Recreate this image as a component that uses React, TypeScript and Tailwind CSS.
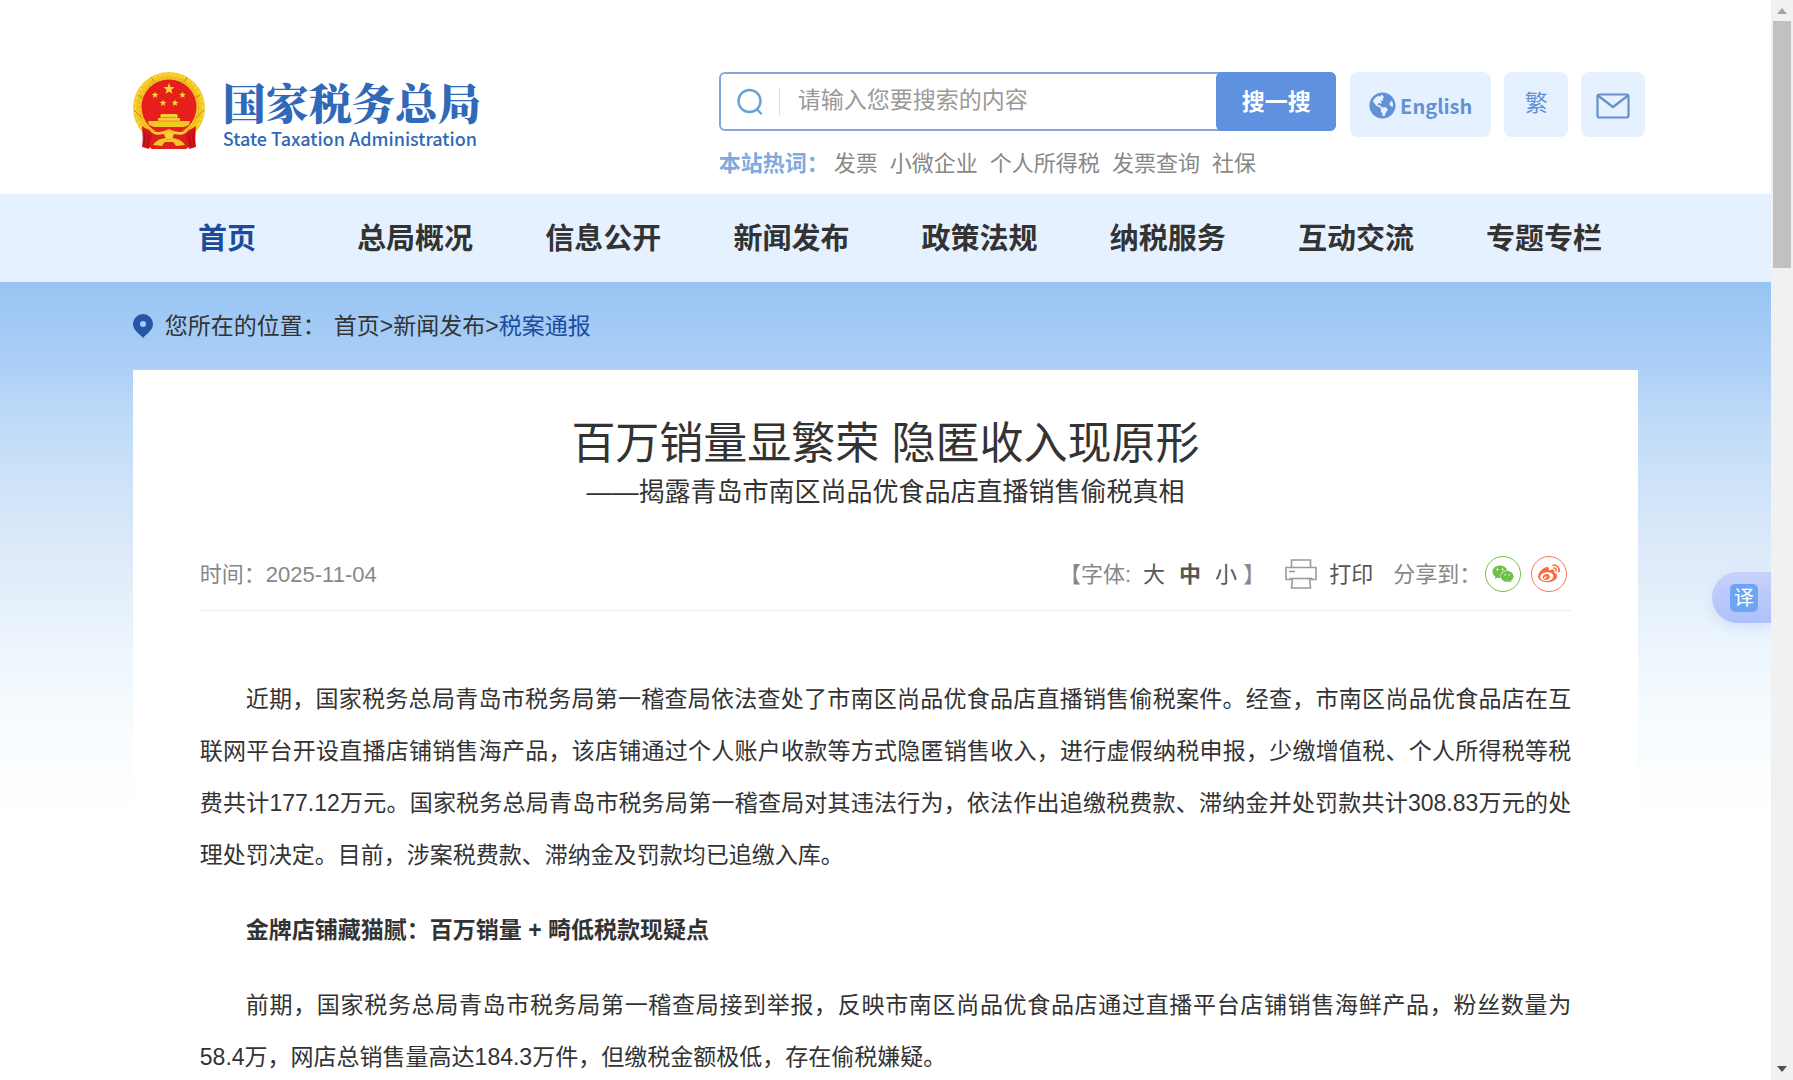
import { FaGlobeAmericas, FaWeibo, FaWeixin } from 'react-icons/fa'

const hotWords = ['发票', '小微企业', '个人所得税', '发票查询', '社保']

const navItems = ['首页', '总局概况', '信息公开', '新闻发布', '政策法规', '纳税服务', '互动交流', '专题专栏']

const paragraphs = [
  {
    text: '近期，国家税务总局青岛市税务局第一稽查局依法查处了市南区尚品优食品店直播销售偷税案件。经查，市南区尚品优食品店在互联网平台开设直播店铺销售海产品，该店铺通过个人账户收款等方式隐匿销售收入，进行虚假纳税申报，少缴增值税、个人所得税等税费共计177.12万元。国家税务总局青岛市税务局第一稽查局对其违法行为，依法作出追缴税费款、滞纳金并处罚款共计308.83万元的处理处罚决定。目前，涉案税费款、滞纳金及罚款均已追缴入库。',
  },
  { text: '金牌店铺藏猫腻：百万销量 + 畸低税款现疑点', bold: true },
  {
    text: '前期，国家税务总局青岛市税务局第一稽查局接到举报，反映市南区尚品优食品店通过直播平台店铺销售海鲜产品，粉丝数量为58.4万，网店总销售量高达184.3万件，但缴税金额极低，存在偷税嫌疑。',
  },
]

function Star({ x, y, r }: { x: number; y: number; r: number }) {
  const points = Array.from({ length: 10 }, (_, i) => {
    const radius = i % 2 === 0 ? r : r * 0.4
    const angle = (Math.PI / 5) * i - Math.PI / 2
    return `${(x + radius * Math.cos(angle)).toFixed(2)},${(y + radius * Math.sin(angle)).toFixed(2)}`
  }).join(' ')
  return <polygon points={points} fill="#fbd83a" />
}

function Emblem() {
  return (
    <svg viewBox="0 0 72 78" className="h-[78px] w-[72px] shrink-0" aria-hidden="true">
      <circle cx="36" cy="36" r="36" fill="#f3c623" />
      <circle cx="36" cy="36" r="34" fill="none" stroke="#f9d840" strokeWidth="2" strokeDasharray="3 2" />
      <circle cx="36" cy="35.500" r="29.500" fill="none" stroke="#e5ad1a" strokeWidth="1.200" strokeDasharray="2 2" />
      <path d="M1 38l8 8M71 38l-8 8M5 23l5 3M67 23l-5 3M18 5l3 5M54 5l-3 5" stroke="#c98a12" strokeWidth="1" />
      <circle cx="36" cy="35" r="27.500" fill="#e71f1c" />
      <Star x={36} y={17} r={6} />
      <Star x={22} y={23} r={3.6} />
      <Star x={49.5} y={23} r={3.6} />
      <Star x={30} y={31} r={3.6} />
      <Star x={42} y={31} r={3.6} />
      {/* gate tower */}
      <path d="M28 42h16l1 3h-1v1h3v5H25v-5h3v-1h-1z" fill="#f8cf33" />
      <path d="M15 49h42l-1 4-5 2H21l-5-2z" fill="#f3c623" />
      <path d="M29 45.500h14M25 49h22" stroke="#d3851a" strokeWidth=".8" />
      {/* drapes and wheel */}
      <path d="M9 54c8 6 18 7 27 5 9 2 19 1 27-5l-1 17-9 6H19l-9-6z" fill="#dd1f1d" />
      <path d="M10 56l9 5v4l-3 12-7-2 1-9zM62 56l-9 5v4l3 12 7-2-1-9z" fill="#d4141a" />
      <path d="M12 61l-1 12M16 63l-2 12M60 61l1 12M56 63l2 12" stroke="#9d1113" strokeWidth="1" />
      <path d="M16 57c7 5 13 3 20 0 7 3 13 5 20 0-2 5-9 7-14 5l-6 4-6-4c-5 2-12 0-14-5z" fill="#f8cf33" />
      <path d="M20 73c4-6 9-7 16-7s12 1 16 7l-9 1-3-4h-8l-3 4z" fill="#f3c623" />
      <circle cx="36" cy="63" r="4.500" fill="#f8cf33" stroke="#d3851a" strokeWidth="1" strokeDasharray="1 1" />
      <path d="M28 77l3-6h10l3 6z" fill="#dd1f1d" />
    </svg>
  )
}

function SearchIcon() {
  return (
    <svg viewBox="0 0 26 28" className="h-7 w-[26px] shrink-0" fill="none" stroke="#6a9fd8" strokeWidth="2.400" strokeLinecap="round" aria-hidden="true">
      <circle cx="12.500" cy="13" r="11" />
      <path d="M20 21.500l4 4" />
    </svg>
  )
}

function MailIcon() {
  return (
    <svg viewBox="0 0 34 26" className="h-[26px] w-[34px]" fill="none" stroke="#668fcb" strokeWidth="2.200" strokeLinejoin="round" aria-hidden="true">
      <rect x="1.500" y="1.500" width="31" height="23" rx="2" />
      <path d="M2.500 3L17 14 31.500 3" />
    </svg>
  )
}

function PinIcon() {
  return (
    <svg viewBox="0 0 20 24" className="h-6 w-5 shrink-0" aria-hidden="true">
      <path d="M10 0a10 10 0 0 1 10 10c0 6-6 9.500-10 14C6 19.500 0 16 0 10A10 10 0 0 1 10 0z" fill="#2556a6" />
      <circle cx="10" cy="10" r="3" fill="#a4cbf5" />
    </svg>
  )
}

function PrinterIcon() {
  return (
    <svg viewBox="0 0 32 30" className="h-[30px] w-8" fill="none" stroke="#9b9b9b" strokeWidth="1.600" aria-hidden="true">
      <path d="M6.500 8.500V1h19v7.500" />
      <path d="M6.500 20.500H1V8.500h30v12h-5.500" />
      <path d="M4.500 19.500h23" />
      <path d="M7.500 19.500L6.500 29h19l-1-9.500" />
      <path d="M4 12.500h6" />
    </svg>
  )
}

function Header() {
  return (
    <header className="mx-auto flex h-[194px] w-[85%] items-start pt-[72px]">
      <a href="#" className="flex w-[586px] shrink-0 items-start text-[#2f69b8]">
        <Emblem />
        <span className="ml-[18px] flex flex-col pt-1.5">
          <span className="font-['Noto_Serif_CJK_SC','Noto_Sans_CJK_SC',serif] text-[43px] leading-[48px] font-black">国家税务总局</span>
          <span className="font-['Noto_Sans_CJK_SC',sans-serif] text-[18px] leading-6 font-medium">State Taxation Administration</span>
        </span>
      </a>

      <div className="min-w-0 flex-1">
        <form className="flex h-[59px] items-stretch rounded-md border-2 border-[#83a6d8] bg-white" onSubmit={(e) => e.preventDefault()}>
          <label htmlFor="keyword" className="flex items-center pl-4">
            <SearchIcon />
            <span className="ml-4 h-7 w-px bg-[#dedede]" />
          </label>
          <input
            id="keyword"
            type="text"
            aria-label="搜索"
            placeholder="请输入您要搜索的内容"
            className="min-w-0 flex-1 px-[18px] pb-0.5 text-[23px] outline-none placeholder:text-[#999]"
          />
          <button type="submit" className="-m-0.5 w-[120px] rounded-md bg-[#5e91e0] pt-0.5 text-[23px] font-bold text-white">
            搜一搜
          </button>
        </form>
        <div className="mt-[17px] flex items-center text-[22px] leading-8 whitespace-nowrap text-[#888]">
          <span className="w-[115px] font-bold text-[#7eaadf]">本站热词：</span>
          <div className="flex gap-3">
            {hotWords.map((word) => (
              <a key={word} href="#">{word}</a>
            ))}
          </div>
        </div>
      </div>

      <div className="-mr-[7px] ml-3.5 flex shrink-0 gap-[13px] text-[20px] text-[#6391d6]">
        <a href="#" className="flex h-[65px] w-[141px] items-center justify-center gap-1 rounded-lg bg-[#e5f1ff] pt-0.5 font-['Noto_Sans_CJK_SC',sans-serif] font-bold">
          <FaGlobeAmericas className="size-[27px]" />
          English
        </a>
        <a href="#" className="flex h-[65px] w-16 items-center justify-center rounded-lg bg-[#e5f1ff] pb-0.5 text-[23px]">繁</a>
        <a href="#" aria-label="邮箱" className="flex h-[65px] w-16 items-center justify-center rounded-lg bg-[#e5f1ff] pt-0.5">
          <MailIcon />
        </a>
      </div>
    </header>
  )
}

function Nav() {
  return (
    <nav className="bg-[#e5f1ff]">
      <ul className="mx-auto grid w-[85%] grid-cols-8 pt-0.5">
        {navItems.map((item, i) => (
          <li key={item} className="text-center text-[29px] leading-[86px] font-bold whitespace-nowrap">
            <a href="#" className={i === 0 ? 'text-[#1b4c9c]' : 'text-[#333]'}>{item}</a>
          </li>
        ))}
      </ul>
    </nav>
  )
}

function ArticleMeta() {
  return (
    <div className="flex h-[75px] items-center border-b border-[#ececec] pt-0.5 text-[22px] whitespace-nowrap text-[#888]">
      <span>时间：2025-11-04</span>
      <div className="ml-auto flex items-center text-[#555]">
        <span className="text-[#888]">【字体:</span>
        <button type="button" className="ml-3">大</button>
        <button type="button" className="ml-3.5 font-bold">中</button>
        <button type="button" className="ml-3.5">小</button>
        <span className="ml-1.5 text-[#888]">】</span>
        <button type="button" className="ml-5 flex items-center gap-3">
          <PrinterIcon />
          打印
        </button>
        <span className="ml-5 text-[#888]">分享到：</span>
        <a href="#" aria-label="微信" className="ml-1 flex size-9 items-center justify-center rounded-full border border-[#6fc04a] text-[#6fc04a]">
          <FaWeixin className="size-[22px]" />
        </a>
        <a href="#" aria-label="微博" className="mr-1 ml-2.5 flex size-9 items-center justify-center rounded-full border border-[#f7794c] text-[#fa6a3a]">
          <FaWeibo className="size-[22px]" />
        </a>
      </div>
    </div>
  )
}

function Article() {
  return (
    <article className="bg-white px-[67px] pt-12 text-[#333]">
      <h1 className="text-center text-[44px] leading-[52px]">百万销量显繁荣 隐匿收入现原形</h1>
      <p className="text-center text-[26px] leading-[44px]">——揭露青岛市南区尚品优食品店直播销售偷税真相</p>
      <div className="mt-[22px]">
        <ArticleMeta />
      </div>
      <div className="flex flex-col gap-[23px] pt-[62px]">
        {paragraphs.map((p) => (
          <p
            key={p.text}
            className={p.bold ? 'indent-[46px] text-[23px] leading-[52px] font-bold' : 'text-justify indent-[46px] text-[23px] leading-[52px]'}
          >
            {p.text}
          </p>
        ))}
      </div>
    </article>
  )
}

function ScrollRail() {
  return (
    <div className="flex w-[22px] shrink-0 flex-col items-center justify-between bg-[#f1f1f1] py-2" aria-hidden="true">
      <div className="flex flex-col items-center gap-[7px]">
        <svg viewBox="0 0 10 6" className="h-1.5 w-2.5"><path d="M0 6l5-6 5 6z" fill="#a3a3a3" /></svg>
        <div className="h-[247px] w-[18px] bg-[#c1c1c1]" />
      </div>
      <svg viewBox="0 0 10 6" className="h-1.5 w-2.5"><path d="M0 0l5 6 5-6z" fill="#505050" /></svg>
    </div>
  )
}

export default function App() {
  return (
    <div className="flex h-screen overflow-hidden bg-white font-['Liberation_Sans','Noto_Sans_CJK_SC',sans-serif]" lang="zh-CN">
      <div className="relative min-w-0 flex-1 overflow-hidden">
        <Header />
        <Nav />
        <main className="bg-[linear-gradient(to_bottom,#97c4f3_0,#aed0f7_88px,#bfdbf8_140px,#cfe3f9_208px,#dfebfa_280px,#ecf5fd_360px,#f8fcfe_450px,#fff_540px)]">
          <div className="mx-auto w-[85%]">
            <div className="flex h-[88px] items-center text-[23px] text-[#333]">
              <PinIcon />
              <span className="ml-3">您所在的位置：</span>
              <span className="ml-2">
                <a href="#">首页</a>&gt;<a href="#">新闻发布</a>&gt;<a href="#" className="text-[#1b4c9c]">税案通报</a>
              </span>
            </div>
            <Article />
          </div>
        </main>
        <button
          type="button"
          aria-label="翻译"
          className="absolute top-[572px] right-0 flex h-[51px] w-[59px] items-center rounded-l-full bg-linear-to-b from-[#c6d2fb] to-[#afc0fb] pl-[18px] shadow-[0_4px_12px_rgba(120,150,230,0.2)]"
        >
          <span className="flex size-7 items-center justify-center rounded-[5px] bg-[#6ea4f4] text-[20px] leading-7 text-white">译</span>
        </button>
      </div>
      <ScrollRail />
    </div>
  )
}
